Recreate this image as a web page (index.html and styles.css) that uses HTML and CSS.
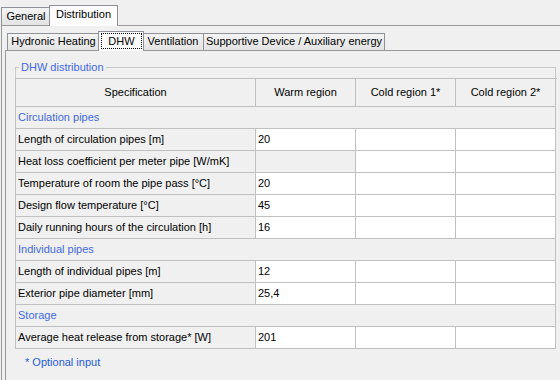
FILE: index.html
```html
<!DOCTYPE html>
<html lang="en">
  <head>
    <meta charset="UTF-8" />
    <title>DHW distribution</title>
    <link rel="stylesheet" href="styles.css">
  </head>
  <body>
    <div class="tabstrip outer">
      <div class="tab tab-general">General</div>
      <div class="tab active tab-distribution">Distribution</div>
    </div>

    <div class="panel outer-panel">
      <div class="tabstrip inner">
        <div class="tab tab-hydronic">Hydronic Heating</div>
        <div class="tab active tab-dhw"><span class="focus">DHW</span></div>
        <div class="tab tab-ventilation">Ventilation</div>
        <div class="tab tab-supportive">Supportive Device / Auxiliary energy</div>
      </div>

      <div class="panel inner-panel">
        <div class="groupbox">
          <span class="legend">DHW distribution</span>

          <div class="spec-grid">
            <div class="head">Specification</div>
            <div class="head">Warm region</div>
            <div class="head">Cold region 1*</div>
            <div class="head">Cold region 2*</div>

            <!-- Circulation pipes -->
            <div class="group">Circulation pipes</div>
            <div>Length of circulation pipes [m]</div>
            <div class="val">20</div><div class="val"></div><div class="val"></div>
            <div>Heat loss coefficient per meter pipe [W/mK]</div>
            <div class="val locked"></div><div class="val"></div><div class="val"></div>
            <div>Temperature of room the pipe pass [°C]</div>
            <div class="val">20</div><div class="val"></div><div class="val"></div>
            <div>Design flow temperature [°C]</div>
            <div class="val">45</div><div class="val"></div><div class="val"></div>
            <div>Daily running hours of the circulation [h]</div>
            <div class="val">16</div><div class="val"></div><div class="val"></div>

            <!-- Individual pipes -->
            <div class="group">Individual pipes</div>
            <div>Length of individual pipes [m]</div>
            <div class="val">12</div><div class="val"></div><div class="val"></div>
            <div>Exterior pipe diameter [mm]</div>
            <div class="val">25,4</div><div class="val"></div><div class="val"></div>

            <!-- Storage -->
            <div class="group">Storage</div>
            <div>Average heat release from storage* [W]</div>
            <div class="val">201</div><div class="val"></div><div class="val"></div>
          </div>
        </div>

        <p class="note">* Optional input</p>
      </div>
    </div>
  </body>
</html>
```

FILE: styles.css
```css
body {
  margin: 0;
  background: #f0f0f0;
  font-family: "Liberation Sans", Arial, sans-serif;
  font-size: 11px;
  color: #000;
  overflow: hidden;
}

/* Tab strips */
.tabstrip {
  display: flex;
  align-items: flex-end;
}

.tabstrip.outer {
  height: 25px;
  padding-left: 1px;
}

.tabstrip.inner {
  height: 24px;
  padding-left: 2px;
}

.tab {
  box-sizing: border-box;
  border: 1px solid #8e9197;
  border-bottom: 0;
  background: linear-gradient(#f4f4f4, #e3e3e3);
  text-align: center;
  white-space: nowrap;
}

.tab + .tab {
  margin-left: -1px;
}

.tab.active {
  position: relative;
  z-index: 1;
  margin: 0 -2px -1px;
  background: #fcfcfc;
}

.tab.active + .tab {
  margin-left: 0;
}

.outer .tab {
  height: 18px;
  line-height: 16px;
}

.outer .tab.active {
  height: 21px;
  line-height: 17px;
}

.inner .tab {
  height: 17px;
  line-height: 15px;
}

.inner .tab.active {
  height: 20px;
}

.tab-general { width: 50px; }
.tab-distribution { width: 69px; }
.tab-hydronic { width: 93px; }
.tab-dhw { width: 46px; }
.tab-ventilation { width: 62px; }
.tab-supportive { width: 182px; }

.focus {
  display: block;
  margin: 1px 1px 0 2px;
  border: 1px dotted #000;
  line-height: 14px;
}

/* Tab pages */
.panel {
  border-left: 1px solid #999;
  border-top: 1px solid #999;
}

.outer-panel {
  margin-left: 1px;
  padding-left: 3px;
  height: 354px;
}

.inner-panel {
  padding-left: 9px;
  height: 329px;
}

/* Group box */
.groupbox {
  position: relative;
  box-sizing: border-box;
  width: 541px;
  margin-top: 16px;
  padding-top: 10px;
  border: 1px solid #c8c8c8;
  border-bottom: 0;
}

.legend {
  position: absolute;
  top: -8px;
  left: 3px;
  padding: 0 2px;
  background: #f0f0f0;
  color: #4169e1;
  line-height: 14px;
}

/* Specification grid */
.spec-grid {
  display: grid;
  grid-template-columns: 240px 100px 100px 100px;
  width: 541px;
  margin-left: -1px;
  border-left: 1px solid #c0c0c0;
  border-top: 1px solid #c0c0c0;
}

.spec-grid > div {
  box-sizing: border-box;
  height: 22px;
  line-height: 21px;
  padding: 0 2px;
  border-right: 1px solid #c0c0c0;
  border-bottom: 1px solid #c0c0c0;
  white-space: nowrap;
  overflow: hidden;
}

.spec-grid .head {
  height: 28px;
  line-height: 27px;
  text-align: center;
}

.spec-grid .group {
  grid-column: 1 / -1;
  color: #4169e1;
}

.spec-grid .val {
  background: #fff;
}

.spec-grid .val.locked {
  background: #f0f0f0;
}

.note {
  margin: 7px 0 0 10px;
  color: #1f5bd8;
  line-height: 13px;
}
```
